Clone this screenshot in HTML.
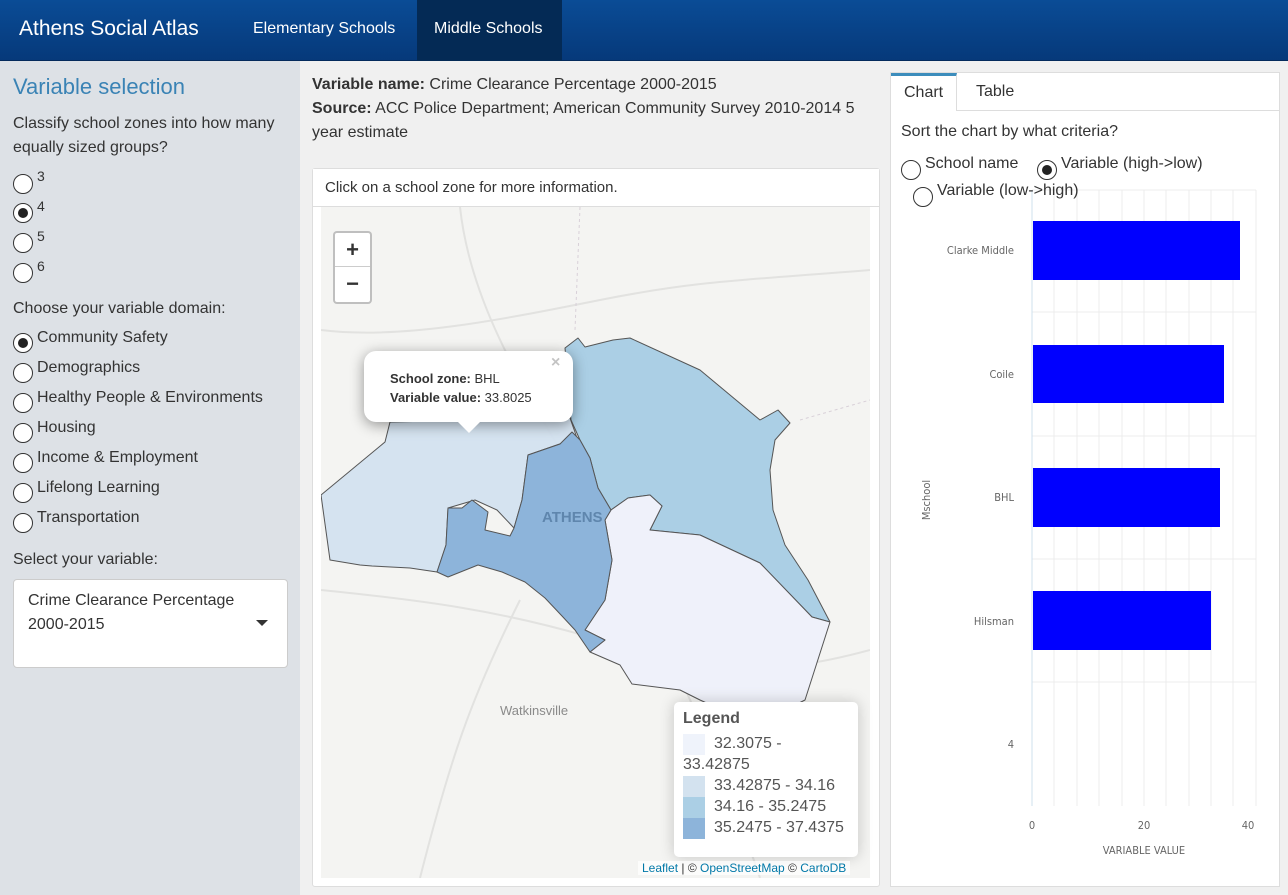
<!DOCTYPE html>
<html><head><meta charset="utf-8"><style>
*{box-sizing:border-box;margin:0;padding:0}
body{width:1288px;height:895px;overflow:hidden;font-family:"Liberation Sans",Arial,sans-serif;background:#f0f0f0;color:#333;position:relative;font-size:16px}
.hdr{position:absolute;left:0;top:0;width:1288px;height:61px;background:linear-gradient(#0a4c96,#06397a);border-bottom:1px solid #042a5c}
.hdr .brand{position:absolute;left:19px;top:17px;color:#fff;font-size:21px}
.hdr .nav{position:absolute;top:20px;color:#fff;font-size:16px}
.hdr .act{position:absolute;left:417px;top:0;width:145px;height:61px;background:#042a55}
.side{position:absolute;left:0;top:61px;width:300px;height:834px;background:#dde1e6}
.abs{position:absolute}
.radio{position:absolute;width:20px;height:20px;border:1px solid #333;border-radius:50%;background:#fff}
.radio.on::after{content:"";position:absolute;left:4px;top:4px;width:10px;height:10px;border-radius:50%;background:#222}
.lbl{position:absolute;font-size:16px;color:#333}
</style></head><body>
<div class="hdr">
<div class="act"></div>
<div class="brand">Athens Social Atlas</div>
<div class="nav" style="left:253px">Elementary Schools</div>
<div class="nav" style="left:434px">Middle Schools</div>
</div>
<div class="side">
<div class="abs" style="left:13px;top:13px;font-size:22px;color:#3a83b5">Variable selection</div>
<div class="abs" style="left:13px;top:51px;line-height:24px;width:280px">Classify school zones into how many equally sized groups?</div>
<div class="radio" style="left:13px;top:113px"></div><div class="lbl" style="left:37px;top:107px;font-size:14px">3</div>
<div class="radio on" style="left:13px;top:142px"></div><div class="lbl" style="left:37px;top:137px;font-size:14px">4</div>
<div class="radio" style="left:13px;top:172px"></div><div class="lbl" style="left:37px;top:167px;font-size:14px">5</div>
<div class="radio" style="left:13px;top:202px"></div><div class="lbl" style="left:37px;top:197px;font-size:14px">6</div>
<div class="abs" style="left:13px;top:239px">Choose your variable domain:</div>
<div class="radio on" style="left:13px;top:272px"></div><div class="lbl" style="left:37px;top:268px">Community Safety</div>
<div class="radio" style="left:13px;top:302px"></div><div class="lbl" style="left:37px;top:298px">Demographics</div>
<div class="radio" style="left:13px;top:332px"></div><div class="lbl" style="left:37px;top:328px">Healthy People &amp; Environments</div>
<div class="radio" style="left:13px;top:362px"></div><div class="lbl" style="left:37px;top:358px">Housing</div>
<div class="radio" style="left:13px;top:392px"></div><div class="lbl" style="left:37px;top:388px">Income &amp; Employment</div>
<div class="radio" style="left:13px;top:422px"></div><div class="lbl" style="left:37px;top:418px">Lifelong Learning</div>
<div class="radio" style="left:13px;top:452px"></div><div class="lbl" style="left:37px;top:448px">Transportation</div>
<div class="abs" style="left:13px;top:490px">Select your variable:</div>
<div class="abs" style="left:13px;top:518px;width:275px;height:89px;background:#fff;border:1px solid #ccc;border-radius:4px;padding:9px 14px;line-height:24px">Crime Clearance Percentage 2000-2015
<div class="abs" style="left:242px;top:40px;width:0;height:0;border-left:6px solid transparent;border-right:6px solid transparent;border-top:6px solid #333"></div></div>
</div>

<div class="abs" style="left:312px;top:73px;width:570px;line-height:24px"><b>Variable name:</b> Crime Clearance Percentage 2000-2015<br><b>Source:</b> ACC Police Department; American Community Survey 2010-2014 5 year estimate</div>

<div class="abs" style="left:312px;top:168px;width:568px;height:719px;background:#fff;border:1px solid #ddd;border-radius:3px">
<div class="abs" style="left:0;top:0;width:566px;height:38px;border-bottom:1px solid #ddd;background:#fff;padding:10px 12px;font-size:15px">Click on a school zone for more information.</div>
</div>
<svg class="abs" style="left:321px;top:207px" width="549" height="671" viewBox="321 207 549 671">
<rect x="321" y="207" width="549" height="671" fill="#f4f4f2"/>
<g fill="none" stroke="#e2e2e0" stroke-width="2">
<path d="M321 590 C420 600 500 610 600 640 S760 680 870 650"/>
<path d="M460 207 C470 300 520 380 560 450"/>
<path d="M321 330 C400 340 500 320 600 300 S750 280 870 270"/>
<path d="M600 520 C640 600 700 700 760 878"/>
<path d="M420 878 C450 760 470 700 520 600"/>
</g>
<path d="M580 207 L575 330 M800 420 L870 400" stroke="#d8d0d8" stroke-dasharray="3 3" fill="none"/>
<text x="500" y="715" font-size="13" fill="#8a8a8a" font-family="Liberation Sans">Watkinsville</text>
<g stroke="#555" stroke-width="1" stroke-linejoin="round">
<path fill="#d3e2ef" fill-opacity=".95" d="M321 495 L385 442 L390 422 L570 418 L577 438 L528 455 L522 500 L514 528 L497 510 L475 500 L448 508 L446 545 L437 572 L410 568 L372 566 L360 565 L330 560 Z"/>
<path fill="#abcfe5" d="M571 420 L565 348 L578 338 L585 347 L613 340 L630 338 L700 370 L760 420 L778 410 L790 423 L775 440 L770 470 L773 510 L785 545 L808 580 L830 622 L812 617 L760 563 L700 535 L650 530 L662 506 L650 495 L628 498 L611 510 L598 488 L590 458 L580 440 Z"/>
<path fill="#eff1fa" d="M611 510 L628 498 L650 495 L662 506 L650 530 L700 535 L760 563 L812 617 L830 622 L805 700 L755 725 L700 700 L680 690 L632 684 L620 665 L590 652 L605 640 L585 630 L605 600 L612 560 L605 520 Z"/>
<path fill="#8db4da" d="M528 455 L560 444 L572 432 L580 440 L590 458 L598 488 L611 510 L605 520 L612 560 L605 600 L585 630 L605 640 L590 652 L575 630 L562 616 L545 598 L525 582 L502 572 L478 565 L448 577 L437 572 L446 545 L448 508 L462 508 L472 500 L488 512 L485 530 L510 536 L514 528 L522 500 Z"/>
</g>
<text x="542" y="522" font-size="15" font-weight="bold" fill="#5f86ad" font-family="Liberation Sans">ATHENS</text>
</svg>
<!-- zoom -->
<div class="abs" style="left:333px;top:231px;width:39px;height:73px;background:#fff;border:2px solid rgba(0,0,0,.25);border-radius:4px">
<div class="abs" style="left:0;top:0;width:35px;height:34px;border-bottom:1px solid #ccc;text-align:center;font:bold 22px/34px 'Liberation Sans'">+</div>
<div class="abs" style="left:0;top:35px;width:35px;height:34px;text-align:center;font:bold 22px/32px 'Liberation Sans'">−</div>
</div>
<!-- popup -->
<div class="abs" style="left:364px;top:351px;width:209px;height:71px;background:#fff;border-radius:12px;box-shadow:0 3px 14px rgba(0,0,0,.4);padding:18px 0 0 26px;font-size:13px;line-height:19px">
<b>School zone:</b> BHL<br><b>Variable value:</b> 33.8025
<div class="abs" style="left:187px;top:3px;color:#c3c3c3;font:bold 16px 'Liberation Sans'">×</div>
<div class="abs" style="left:94px;top:71px;width:0;height:0;border-left:11px solid transparent;border-right:11px solid transparent;border-top:11px solid #fff"></div>
</div>
<!-- legend -->
<div class="abs" style="left:674px;top:702px;width:184px;height:155px;background:#fff;border-radius:5px;box-shadow:0 0 15px rgba(0,0,0,.2);font-size:16px;color:#555">
<div class="abs" style="left:9px;top:8px;font-weight:bold">Legend</div>
<div class="abs" style="left:9px;top:32px;width:22px;height:21px;background:#eff3fb"></div>
<div class="abs" style="left:40px;top:33px">32.3075 -</div>
<div class="abs" style="left:9px;top:54px">33.42875</div>
<div class="abs" style="left:9px;top:74px;width:22px;height:21px;background:#d3e2ef"></div>
<div class="abs" style="left:9px;top:95px;width:22px;height:21px;background:#abcfe5"></div>
<div class="abs" style="left:9px;top:116px;width:22px;height:21px;background:#8db4da"></div>
<div class="abs" style="left:40px;top:75px">33.42875 - 34.16</div>
<div class="abs" style="left:40px;top:96px">34.16 - 35.2475</div>
<div class="abs" style="left:40px;top:117px">35.2475 - 37.4375</div>
</div>
<div class="abs" style="left:638px;top:861px;font-size:12px;color:#333;background:rgba(255,255,255,.7);padding:0 4px"><span style="color:#0078a8">Leaflet</span> | © <span style="color:#0078a8">OpenStreetMap</span> © <span style="color:#0078a8">CartoDB</span></div>

<!-- right panel -->
<div class="abs" style="left:890px;top:72px;width:390px;height:815px;background:#fff;border:1px solid #ddd"></div>
<div class="abs" style="left:891px;top:73px;width:66px;height:38px;background:#fff;border-top:3px solid #3c8dbc;border-right:1px solid #ddd;font-size:16px;padding:8px 0 0 13px">Chart</div>
<div class="abs" style="left:957px;top:110px;width:322px;height:1px;background:#ddd"></div>
<div class="abs" style="left:976px;top:83px">Table</div>
<div class="abs" style="left:901px;top:123px">Sort the chart by what criteria?</div>
<div class="radio" style="left:901px;top:160px"></div><div class="lbl" style="left:925px;top:155px">School name</div>
<div class="radio on" style="left:1037px;top:160px"></div><div class="lbl" style="left:1061px;top:155px">Variable (high-&gt;low)</div>
<svg class="abs" style="left:900px;top:188px" width="370" height="680" viewBox="900 188 370 680" font-family="DejaVu Sans Condensed,DejaVu Sans,sans-serif">
<g stroke="#ececec"><path d="M1054 190V806M1077 190V806M1099 190V806M1122 190V806M1144 190V806M1166 190V806M1189 190V806M1211 190V806M1233 190V806M1256 190V806"/>
<path d="M1032 190H1256M1032 312H1256M1032 436H1256M1032 559H1256M1032 682H1256"/></g>
<path d="M1032 190V806" stroke="#cfe0ee"/>
<g fill="#0000ff"><rect x="1033" y="221" width="207" height="59"/><rect x="1033" y="345" width="191" height="58"/><rect x="1033" y="468" width="187" height="59"/><rect x="1033" y="591" width="178" height="59"/></g>
<g font-size="11" fill="#666" text-anchor="end"><text x="1014" y="254">Clarke Middle</text><text x="1014" y="378">Coile</text><text x="1014" y="501">BHL</text><text x="1014" y="625">Hilsman</text><text x="1014" y="748">4</text></g>
<g font-size="11" fill="#666" text-anchor="middle"><text x="1032" y="829">0</text><text x="1144" y="829">20</text><text x="1248" y="829">40</text><text x="1144" y="854">VARIABLE VALUE</text></g>
<text transform="translate(930 500) rotate(-90)" font-size="11" fill="#666" text-anchor="middle">Mschool</text>
</svg>
<div class="radio" style="left:913px;top:187px"></div><div class="lbl" style="left:937px;top:182px">Variable (low-&gt;high)</div>
</body></html>
